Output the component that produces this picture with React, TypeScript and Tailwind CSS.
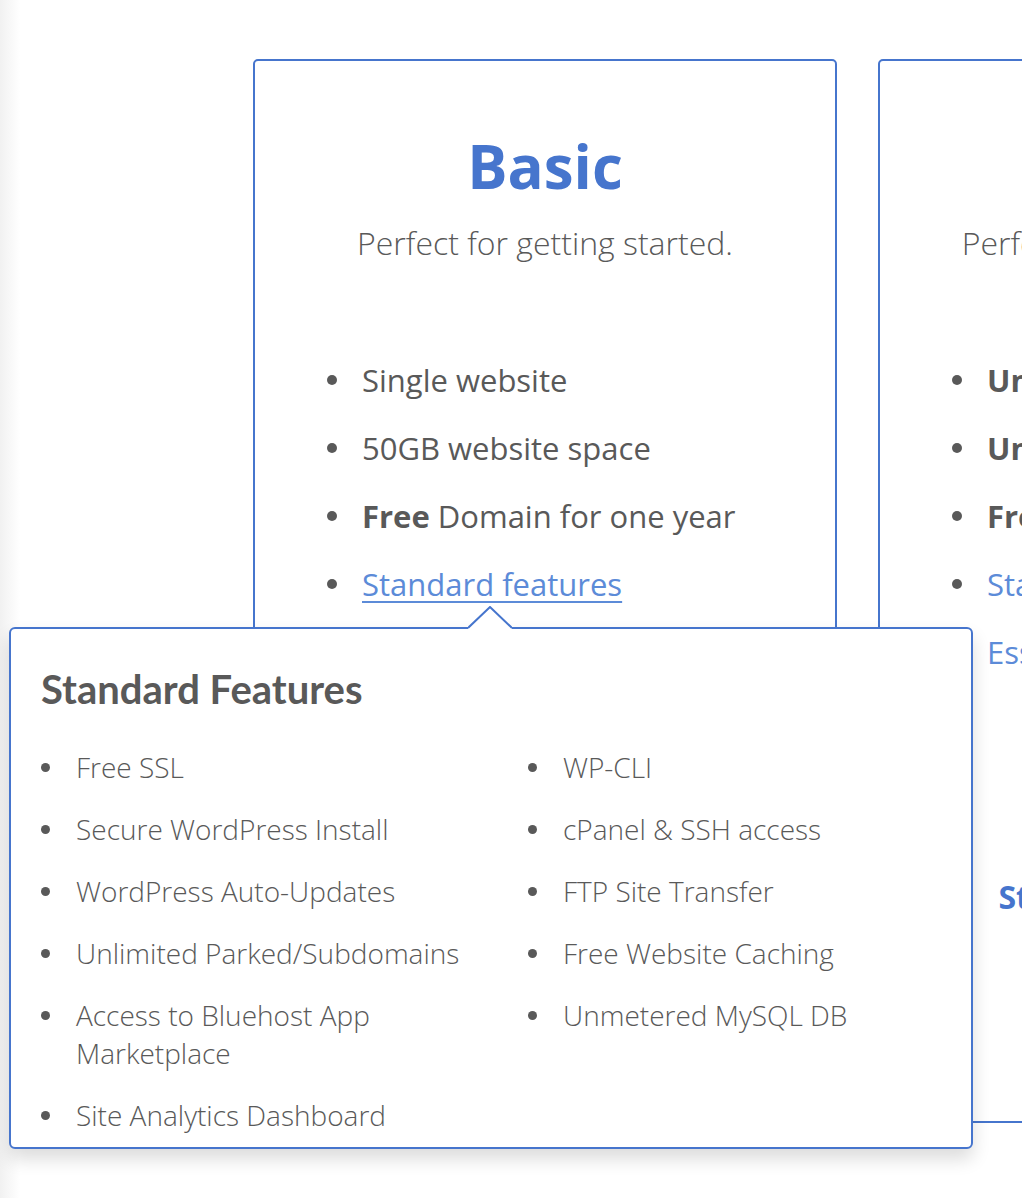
const BLUE = "#4675cd";

type Item = { bold?: string; text?: string; link?: string; noBullet?: boolean };

const BASIC: Item[] = [
  { text: "Single website" },
  { text: "50GB website space" },
  { bold: "Free", text: " Domain for one year" },
  { link: "Standard features" },
];

const PLUS: Item[] = [
  { bold: "Unlimited", text: " websites" },
  { bold: "Unmetered", text: " website space" },
  { bold: "Free", text: " Domain for one year" },
  { link: "Standard features" },
  { link: "Essential extras", noBullet: true },
];

const FEATURES_LEFT = [
  "Free SSL",
  "Secure WordPress Install",
  "WordPress Auto-Updates",
  "Unlimited Parked/Subdomains",
  "Access to Bluehost App Marketplace",
  "Site Analytics Dashboard",
];

const FEATURES_RIGHT = [
  "WP-CLI",
  "cPanel & SSH access",
  "FTP Site Transfer",
  "Free Website Caching",
  "Unmetered MySQL DB",
];

function PlanCard({
  title,
  subtitle,
  items,
  price,
  underline,
}: {
  title: string;
  subtitle: string;
  items: Item[];
  price?: string;
  underline?: boolean;
}) {
  return (
    <div className="w-[584px] h-[1064px] shrink-0 rounded-[5px] border-2 border-[#4675cd] pt-[75px]">
      <h2 className="text-center text-[60px] leading-none font-bold text-[#4675cd]">{title}</h2>
      <p className="mt-[29px] text-center text-[32px] leading-[36px] font-light text-[#595959]">{subtitle}</p>

      <ul className="mt-[85px] pl-[72px] h-[340px] flex flex-col">
        {items.map((it, i) => (
          <li key={i} className="flex items-center h-[68px] text-[31px] leading-[68px] text-[#595959]">
            <span className={`w-[10px] h-[10px] rounded-full mr-[25px] shrink-0 ${it.noBullet ? "bg-transparent" : "bg-[#595959]"}`} />
            {it.link ? (
              <a className={`text-[#5c8bd8] ${underline ? "underline underline-offset-[5px] decoration-[1.5px]" : ""}`}>{it.link}</a>
            ) : (
              <span>
                {it.bold && <b className="font-bold">{it.bold}</b>}
                {it.text}
              </span>
            )}
          </li>
        ))}
      </ul>

      {price && (
        <p className="mt-[193px] text-center text-[32px] leading-[36px] font-bold text-[#4675cd]">{price}</p>
      )}
    </div>
  );
}

function FeatureList({ items, className = "" }: { items: string[]; className?: string }) {
  return (
    <ul className={`flex flex-col gap-[24px] ${className}`}>
      {items.map((f) => (
        <li key={f} className="flex items-start text-[28px] leading-[38px] font-light text-[#595959]">
          <span className="w-[9px] h-[9px] rounded-full bg-[#595959] mt-[15px] mr-[26px] shrink-0" />
          <span>{f}</span>
        </li>
      ))}
    </ul>
  );
}

export default function App() {
  return (
    <div className="relative w-[1022px] h-[1198px] overflow-hidden bg-white" style={{ fontFamily: '"Open Sans", "Noto Sans", sans-serif' }}>
      {/* faint edge shade on the left */}
      <div className="absolute left-0 top-0 bottom-0 w-[20px] bg-gradient-to-r from-[#f1f1f1] to-white" />

      <div className="flex gap-[41px] pt-[59px] pl-[253px]">
        <PlanCard title="Basic" subtitle="Perfect for getting started." items={BASIC} underline />
        <PlanCard title="Plus" subtitle="Perfect for multiple websites." items={PLUS} price="Starting at $10.95/mo" />
      </div>

      {/* Standard features popover */}
      <div className="absolute left-[9px] top-[627px] w-[964px] h-[522px] bg-white border-2 border-[#4675cd] rounded-[6px] shadow-[0_10px_18px_rgba(0,0,0,0.14)] pt-[40px] pl-[30px]">
        <svg className="absolute left-[457px] top-[-23px]" width="44" height="25" viewBox="0 0 44 25">
          <polygon points="0,22 22,1 44,22" fill="#fff" />
          <rect x="0" y="21" width="44" height="4" fill="#fff" />
          <path d="M0 22 L22 1 L44 22" fill="none" stroke={BLUE} strokeWidth="2" />
        </svg>

        <h3 className="text-[40px] leading-none font-bold text-[#595959]" style={{ fontFamily: "Lato, sans-serif" }}>
          Standard Features
        </h3>

        <div className="mt-[39px] grid grid-cols-[487px_1fr]">
          <FeatureList items={FEATURES_LEFT} className="pr-[24px]" />
          <FeatureList items={FEATURES_RIGHT} />
        </div>
      </div>
    </div>
  );
}
